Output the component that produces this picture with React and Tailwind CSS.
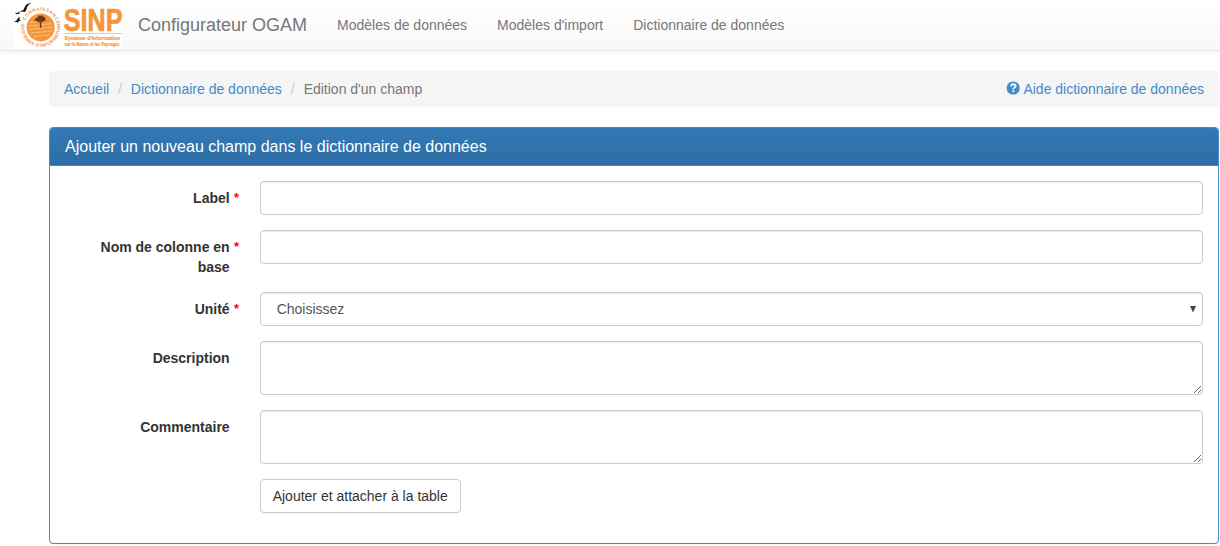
import React from "react";

const control =
  "block w-full rounded border border-[#ccc] bg-white px-3 py-1.5 text-[14px] leading-5 text-[#555] shadow-[inset_0_1px_1px_rgba(0,0,0,0.075)] outline-none";

function Logo() {
  return (
    <svg className="block h-[50px] w-[112px] shrink-0 overflow-visible" viewBox="13 0 112 50" role="img" aria-label="SINP">
      <rect x="13" y="0" width="109" height="49" fill="#fff" />
      <defs>
        <path id="ringTop" d="M24.6 32.5 A16.8 16.8 0 1 1 56.4 32.5" />
        <path id="ringBottom" d="M21.6 22 A19.6 19.6 0 1 0 59.4 22" />
      </defs>
      <g fill="#ec9246" fontFamily="Liberation Sans, Arial, sans-serif" fontWeight="700" fontSize="4.5">
        <text>
          <textPath href="#ringTop" startOffset="12" textLength="43">CONNAISSANCE</textPath>
        </text>
        <text>
          <textPath href="#ringBottom" startOffset="2" textLength="68">SYSTÈMES D'INFORMATION</textPath>
        </text>
      </g>
      <circle cx="40.7" cy="27.4" r="14" fill="#f4963c" />
      <g stroke="#ffcf99" strokeWidth="0.8" strokeDasharray="3 0.8 2 0.6" fill="none">
        <path d="M30 22.5 L38 21.5 M29 26 L52 23.5 M29 29.5 L53 27 M31 33 L52 31 M34 36.8 L50 34.8" />
      </g>
      <path
        d="M34.2 20.6l1.8-2.6 1.6-.6.9-2 2 .7 1.7-1.1 1.2 1.9 1.9.1-.3 1.9 1.4 1.4-2.3.5-1.2 1.5-1.5-1-.2 6.8h-1.2l-.3-6.5-1.8 1-1-1.6z"
        fill="#6b3a14"
      />
      <path
        d="M20.4 11.2l2.9-1.2 2.2-4.6 2-1.7 4.2-.6-3 1.6-1.6 2.4-1 3.6-1.5 1.3-2-.4-2.2.4zM13.8 22l2.6-1.2 1.4-2.6 2-1.4-.4 2.6 1.8.8-2.2.7-1.3 1.9-1.3-.8zM14.8 12.4l2.2.8 2.2-1.6.5 2.5-1.6-.3-1.5.8z"
        fill="#191716"
      />
      <g fill="#f4953b" fontFamily="Liberation Sans, Arial, sans-serif" fontWeight="700">
        <text x="63.8" y="30.8" fontSize="30.5" textLength="58.6" lengthAdjust="spacingAndGlyphs" stroke="#f4953b" strokeWidth=".7">SINP</text>
        <path d="M64.5 33.2h57.5v.8H64.5z" opacity=".7" />
        <text x="64.5" y="39.9" fontSize="5" textLength="55.5" lengthAdjust="spacing" stroke="#f4953b" strokeWidth=".2">Système d'Information</text>
        <text x="64.5" y="46" fontSize="4.6" textLength="55" lengthAdjust="spacingAndGlyphs" stroke="#f4953b" strokeWidth=".15">sur la Nature et les Paysages</text>
      </g>
    </svg>
  );
}

function Row({ label, required, children }) {
  return (
    <div className="mb-[15px] flex items-start">
      <div className="w-[194.67px] shrink-0 pt-[7px] pr-[15px] text-right font-bold">
        <label className="relative block pl-[30px]">
          {label}
          {required && <span className="absolute top-0 -right-[9.5px] text-[13px] text-[#f00]">*</span>}
        </label>
      </div>
      <div className="min-w-0 flex-1 pl-[15px]">{children}</div>
    </div>
  );
}

export default function App() {
  return (
    <div className="h-[546px] overflow-hidden bg-white font-['Liberation_Sans',Arial,sans-serif] text-[14px] leading-5 text-[#333]">
      <nav className="flex h-[51px] items-start border-b border-[#e7e7e7] bg-linear-to-b from-white to-[#f8f8f8] pl-[13px] text-[#777] shadow-[0_1px_5px_rgba(0,0,0,0.075)]">
        <Logo />
        <a className="ml-[13px] py-[15px] text-[18px] whitespace-nowrap">Configurateur OGAM</a>
        <div className="ml-[15px] flex whitespace-nowrap">
          <a className="p-[15px]">Modèles de données</a>
          <a className="p-[15px]">Modèles d'import</a>
          <a className="p-[15px]">Dictionnaire de données</a>
        </div>
      </nav>

      <main className="mt-5 mr-px ml-[49px]">
        <div className="mb-5 flex justify-between rounded bg-[#f5f5f5] px-[15px] py-2 text-[#428bca]">
          <div className="flex">
            <a>Accueil</a>
            <span className="w-[21.7px] text-center text-[#ccc]">/</span>
            <a>Dictionnaire de données</a>
            <span className="w-[21.8px] text-center text-[#ccc]">/</span>
            <span className="text-[#777]">Edition d'un champ</span>
          </div>
          <a className="flex items-start gap-[3.9px]">
            <svg className="mt-[2px] h-[14px] w-[14px]" viewBox="0 0 14 14" aria-hidden="true">
              <circle cx="7.2" cy="7" r="6.6" fill="#428bca" />
              <path d="M4.9 5.5C4.9 4 5.8 3.3 7.2 3.3s2.4.8 2.4 2C9.6 6.6 7.3 6.5 7.3 8.3" fill="none" stroke="#f5f5f5" strokeWidth="1.9" />
              <path d="M6.3 9.2h2v2h-2z" fill="#f5f5f5" />
            </svg>
            Aide dictionnaire de données
          </a>
        </div>

        <section className="h-[417px] rounded border border-[#428bca] bg-white shadow-[0_1px_2px_rgba(0,0,0,0.05)]">
          <h3 className="h-[38px] rounded-t-[3px] border-b border-[#428bca] bg-linear-to-b from-[#337ab7] to-[#2e6da4] px-[15px] py-[10px] text-[16px] leading-[17.6px] text-white">
            Ajouter un nouveau champ dans le dictionnaire de données
          </h3>
          <form className="py-[15px] pr-[15px]">
            <Row label="Label" required>
              <input className={`${control} h-[34px]`} />
            </Row>
            <Row label="Nom de colonne en base" required>
              <input className={`${control} h-[34px]`} />
            </Row>
            <Row label="Unité" required>
              <div className={`${control} flex h-[34px] items-center justify-between pr-[5px] pl-4`}>
                <span>Choisissez</span>
                <svg className="h-[6px] w-[8px]" viewBox="0 0 8 6" aria-hidden="true">
                  <path d="M1 0h6L4.2 6h-.4z" fill="#444" />
                </svg>
              </div>
            </Row>
            <Row label="Description">
              <textarea className={`${control} h-[54px] resize-y`} />
            </Row>
            <Row label="Commentaire">
              <textarea className={`${control} h-[54px] resize-y`} />
            </Row>
            <Row>
              <button type="button" className="block h-[34px] rounded border border-[#ccc] bg-white px-3 py-1.5 whitespace-nowrap shadow-[0_1px_1px_rgba(0,0,0,0.05)]">
                Ajouter et attacher à la table
              </button>
            </Row>
          </form>
        </section>
      </main>
    </div>
  );
}
